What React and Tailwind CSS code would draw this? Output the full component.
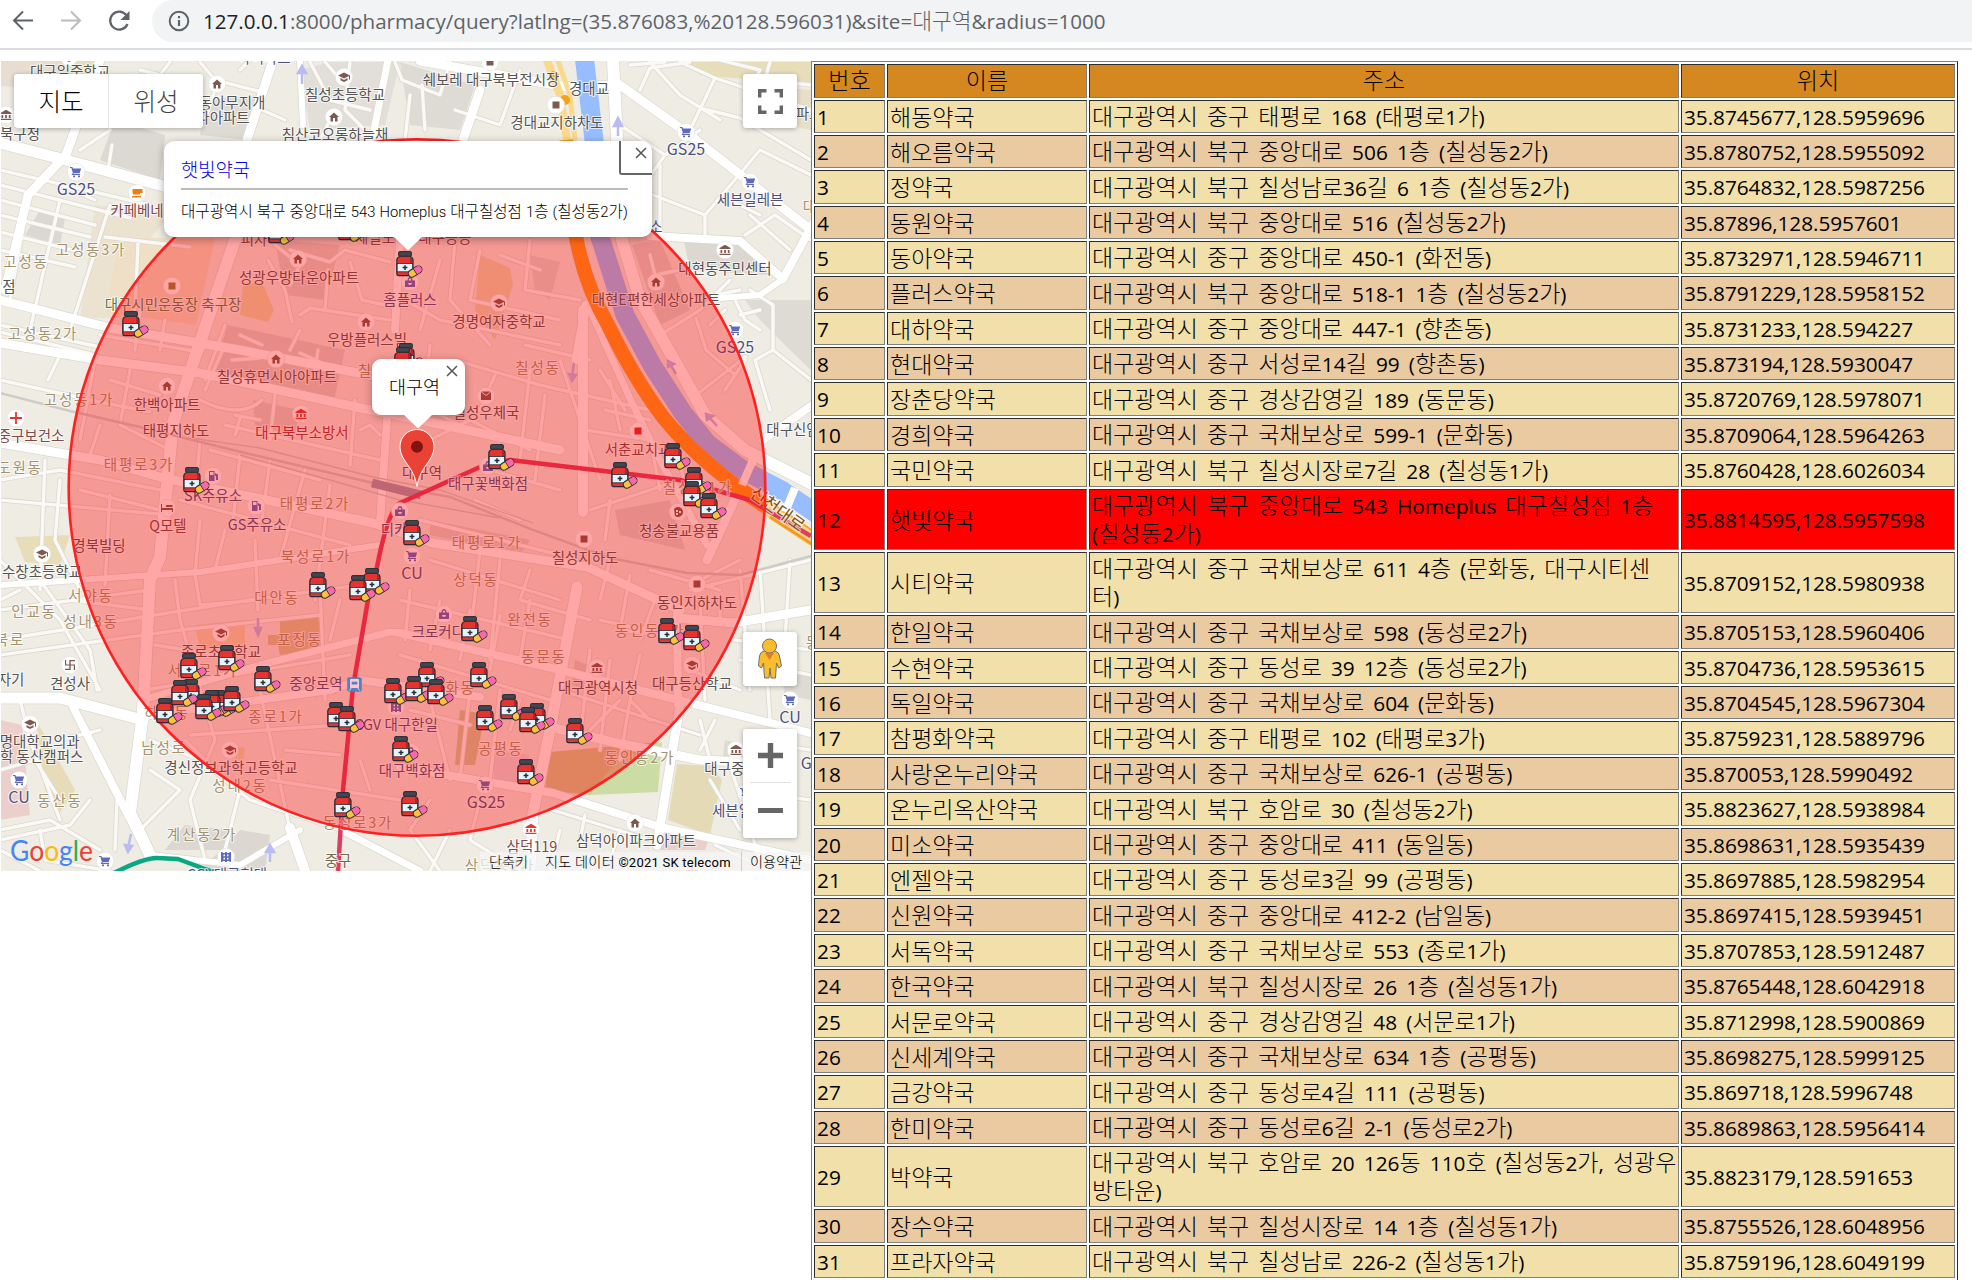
import React from "react";

const ROWS = [
  [100, "해동약국", ["대구광역시 중구 태평로 168 (태평로1가)"], "35.8745677,128.5959696"],
  [135, "해오름약국", ["대구광역시 북구 중앙대로 506 1층 (칠성동2가)"], "35.8780752,128.5955092"],
  [170, "정약국", ["대구광역시 북구 칠성남로36길 6 1층 (칠성동2가)"], "35.8764832,128.5987256"],
  [206, "동원약국", ["대구광역시 북구 중앙대로 516 (칠성동2가)"], "35.87896,128.5957601"],
  [241, "동아약국", ["대구광역시 중구 중앙대로 450-1 (화전동)"], "35.8732971,128.5946711"],
  [276, "플러스약국", ["대구광역시 북구 중앙대로 518-1 1층 (칠성동2가)"], "35.8791229,128.5958152"],
  [312, "대하약국", ["대구광역시 중구 중앙대로 447-1 (향촌동)"], "35.8731233,128.594227"],
  [347, "현대약국", ["대구광역시 중구 서성로14길 99 (향촌동)"], "35.873194,128.5930047"],
  [382, "장춘당약국", ["대구광역시 중구 경상감영길 189 (동문동)"], "35.8720769,128.5978071"],
  [418, "경희약국", ["대구광역시 중구 국채보상로 599-1 (문화동)"], "35.8709064,128.5964263"],
  [453, "국민약국", ["대구광역시 북구 칠성시장로7길 28 (칠성동1가)"], "35.8760428,128.6026034"],
  [489, "햇빛약국", ["대구광역시 북구 중앙대로 543 Homeplus 대구칠성점 1층", "(칠성동2가)"], "35.8814595,128.5957598"],
  [552, "시티약국", ["대구광역시 중구 국채보상로 611 4층 (문화동, 대구시티센", "터)"], "35.8709152,128.5980938"],
  [615, "한일약국", ["대구광역시 중구 국채보상로 598 (동성로2가)"], "35.8705153,128.5960406"],
  [651, "수현약국", ["대구광역시 중구 동성로 39 12층 (동성로2가)"], "35.8704736,128.5953615"],
  [686, "독일약국", ["대구광역시 중구 국채보상로 604 (문화동)"], "35.8704545,128.5967304"],
  [721, "참평화약국", ["대구광역시 중구 태평로 102 (태평로3가)"], "35.8759231,128.5889796"],
  [757, "사랑온누리약국", ["대구광역시 중구 국채보상로 626-1 (공평동)"], "35.870053,128.5990492"],
  [792, "온누리옥산약국", ["대구광역시 북구 호암로 30 (칠성동2가)"], "35.8823627,128.5938984"],
  [828, "미소약국", ["대구광역시 중구 중앙대로 411 (동일동)"], "35.8698631,128.5935439"],
  [863, "엔젤약국", ["대구광역시 중구 동성로3길 99 (공평동)"], "35.8697885,128.5982954"],
  [898, "신원약국", ["대구광역시 중구 중앙대로 412-2 (남일동)"], "35.8697415,128.5939451"],
  [934, "서독약국", ["대구광역시 중구 국채보상로 553 (종로1가)"], "35.8707853,128.5912487"],
  [969, "한국약국", ["대구광역시 북구 칠성시장로 26 1층 (칠성동1가)"], "35.8765448,128.6042918"],
  [1005, "서문로약국", ["대구광역시 중구 경상감영길 48 (서문로1가)"], "35.8712998,128.5900869"],
  [1040, "신세계약국", ["대구광역시 중구 국채보상로 634 1층 (공평동)"], "35.8698275,128.5999125"],
  [1075, "금강약국", ["대구광역시 중구 동성로4길 111 (공평동)"], "35.869718,128.5996748"],
  [1111, "한미약국", ["대구광역시 중구 동성로6길 2-1 (동성로2가)"], "35.8689863,128.5956414"],
  [1146, "박약국", ["대구광역시 북구 호암로 20 126동 110호 (칠성동2가, 성광우", "방타운)"], "35.8823179,128.591653"],
  [1209, "장수약국", ["대구광역시 북구 칠성시장로 14 1층 (칠성동1가)"], "35.8755526,128.6048956"],
  [1245, "프라자약국", ["대구광역시 북구 칠성남로 226-2 (칠성동1가)"], "35.8759196,128.6049199"],
  [1280],
];

/* Hangul and Latin runs use separate faces and sizes. */
function Mixed({ children, ko = "text-[23px]", en = "text-[20.8px]" }) {
  return children.split(/([\uAC00-\uD7A3]+)/).filter(Boolean).map((run, i) =>
    /[\uAC00-\uD7A3]/.test(run) ? (
      <span key={i} className={`font-['Noto_Sans_CJK_KR',sans-serif] font-light ${ko}`}>{run}</span>
    ) : (
      <span key={i} className={`whitespace-pre ${en}`}>{run}</span>
    )
  );
}

function BrowserBar() {
  return (
    <header className="flex h-[50px] w-full shrink-0 items-start border-b-2 border-[#dadce0] bg-white">
      <div className="flex h-[42px] w-[152px] items-center">
        <svg className="ml-[11px] h-[24px] w-[24px]" viewBox="0 0 24 24" fill="none" stroke="#5f6368" strokeWidth="2">
          <path d="M22 11.5H3M12 2.5L3 11.5l9 9" />
        </svg>
        <svg className="ml-[24px] h-[24px] w-[24px]" viewBox="0 0 24 24" fill="none" stroke="#babcbe" strokeWidth="2">
          <path d="M2 11.5h19M12 2.5l9 9-9 9" />
        </svg>
        <svg className="ml-[24px] h-[24px] w-[24px]" viewBox="0 0 24 24">
          <path d="M19.4 6.2A9 9 0 1 0 20.5 15" fill="none" stroke="#5f6368" strokeWidth="2.2" />
          <path d="M22.5 2v9h-9z" fill="#5f6368" />
        </svg>
      </div>
      <div className="flex h-[42px] flex-1 items-center rounded-l-full bg-[#f1f3f4] pl-[16px]">
        <svg className="h-[22px] w-[22px]" viewBox="0 0 22 22">
          <circle cx="11" cy="11" r="9.3" fill="none" stroke="#5f6368" strokeWidth="2" />
          <path d="M11 10v6M11 6v2.2" stroke="#5f6368" strokeWidth="2.2" />
        </svg>
        <div className="mb-[2px] ml-[13px] flex items-baseline whitespace-nowrap font-['Open_Sans',sans-serif] text-[#5f6368]">
          <span className="text-[20.6px] text-[#202124]">127.0.0.1</span>
          <Mixed en="text-[20.6px]" ko="text-[21.5px]">:8000/pharmacy/query?latlng=(35.876083,%20128.596031)&site=대구역&radius=1000</Mixed>
        </div>
      </div>
    </header>
  );
}

const MAJOR = [
  ["M0 143L58 158L167 187L420 235", 11], ["M100 60L66 155L28 195L5 290", 9], ["M273 60L247 140", 9], ["M300 60L303 125", 6],
  ["M388 60L372 140", 7], ["M420 61L567 87L615 85", 9], ["M613 60L617 140L640 230", 12], ["M617 83L687 133L811 230", 9],
  ["M480 90L463 140", 9], ["M650 236L740 241L783 279L815 220", 8], ["M783 279L760 295L720 298", 6],
  ["M0 300L110 328L200 343L240 350L420 385", 9], ["M0 343L100 360L200 373L370 410L420 420L560 450", 9],
  ["M240 225L193 363L173 423L160 557L150 580L143 713L130 813L150 855", 12],
  ["M0 443L100 460L160 477L373 523L433 543L587 567L680 610", 9], ["M0 585L200 572L380 545", 6],
  ["M387 420L380 523", 8], ["M583 310L583 512", 10], ["M588 305L608 350L633 405L660 460L707 545", 7], ["M586 305L576 360", 9],
  ["M622 240L640 300L680 370L705 415L745 450L820 488", 12], ["M753 460L707 560", 9], ["M815 403L763 440", 8],
  ["M0 698L60 698L143 720", 11], ["M73 707L127 813L150 855", 8], ["M150 855L240 865L300 830", 6],
  ["M577 587L550 730L533 813L530 870", 11], ["M400 633L560 670L690 703L811 733", 8],
  ["M550 727L617 743L700 760L745 762", 9], ["M400 767L553 793L660 827L811 860", 8], ["M680 705L657 845", 9],
  ["M677 610L678 705", 8], ["M811 610L733 623L677 618", 9], ["M143 700L260 665L390 632L400 633", 7],
  ["M150 715L330 690L360 680L480 697", 8], ["M290 828L305 871", 10], ["M345 832L420 871", 7], ["M400 240L395 330", 8],
];
const MINOR = [
  "M0 170L150 205M0 185L130 218M0 200L95 225M0 215L90 237M0 232L80 252M0 250L75 267M30 190L10 300M60 200L30 330M110 205L70 330M95 200L60 185",
  "M105 237L190 247M138 243L135 310M0 325L100 347M0 332L95 355M60 355L48 380M0 380L100 402L150 412M45 460L40 590M0 480L60 470L160 490M0 500L170 515",
  "M100 62L110 130L80 150M112 145L108 170M170 62L160 75L140 70M200 62L215 80L262 92M250 60L240 70M262 110L285 120M215 90L205 120",
  "M310 62L330 100L370 110M325 62L345 85M350 62L345 110L365 130M330 120L320 140M395 62L402 80L440 95L450 62M410 95L405 140M422 85L425 130M455 110L500 125L520 70",
  "M630 65L665 62M640 90L650 68L690 62M650 62L680 95L720 120M680 62L715 78L690 130M715 78L811 110M700 108L740 118L811 160M720 60L760 70L745 100M770 62L765 80L811 85M620 125L665 155L640 190M665 155L700 130M640 190L705 215L760 150M705 215L705 235M760 150L811 175M730 200L760 215M750 215L790 250M660 165L660 235M745 235L775 215L811 240",
  "M268 260L285 290L292 322M300 315L310 308L390 320M328 270L325 310M290 250L330 262L345 250L390 262M275 245L300 265L290 285M350 262L362 300L385 305M225 325L205 380M240 335L262 345M232 360L260 358M300 353L320 362M318 350L315 370",
  "M225 345L205 390M200 400Q240 420 262 400M235 415L260 420M240 418L235 435M300 330L290 350M225 425L380 460M355 400L350 465M275 395L270 440M360 430L370 425L380 435M140 310L135 350M165 320L160 350M100 335L200 352M205 345L195 365",
  "M95 360L80 440M130 370L120 425L170 450M100 425L90 455M110 380L160 395M60 480L55 540L80 590M80 490L160 510M110 495L105 585M180 500L350 545M200 440L195 500M210 450L320 480M240 455L232 530M270 460L262 520M305 470L280 560M330 485L315 600M200 520L195 575M225 530L215 570M255 540L258 610",
  "M405 300L440 320L560 345M440 260L420 330M480 250L470 300L560 320M500 255L540 270M455 240L450 300L490 345M530 240L525 290L580 300M525 345L590 360M430 345L425 400M455 360L540 385L650 410M495 375L480 410L440 415M530 370L520 460M560 360L600 480M600 370L625 410M605 410L650 420M610 380L620 430M585 430L650 440L660 490",
  "M420 405L470 430M430 440L470 420L530 450M545 395L535 480M490 470L560 490M590 510L680 480M610 500L605 540M680 460L690 520M475 500L520 520M420 520L560 555M430 560L560 600M480 550L470 640M500 560L490 660M530 570L520 600L590 620M610 560L600 600M630 575L620 630L700 640M650 570L720 590M740 560L700 580",
  "M0 610L150 590M0 640L155 615L250 600L360 585M0 655L180 630L320 615M0 560L60 620L100 690M40 580L90 650L97 690M20 590L0 600M70 600L150 610M175 580L180 620L215 740M195 575L200 605L260 600M320 590L325 700M340 600L330 640M155 645L220 655M145 690L350 655M190 735L340 725M185 740L215 770M260 690L290 830M150 740L200 760L250 800L340 830M215 740L190 800L205 860M240 790L225 850M150 770L180 790L140 830M117 800L115 850M285 750L340 755M270 780L400 800M360 760L370 790",
  "M400 600L570 640M410 590L405 640M440 600L430 650M470 610L460 660M500 615L490 670M530 600L520 660M400 655L550 700M420 660L450 780M470 690L460 780M410 710L470 725M500 690L490 780M520 700L510 730M560 690L700 735M590 650L580 740M610 660L600 750M640 655L630 700L620 760M600 620L690 640M655 600L640 640M630 700L650 720M590 730L620 700",
  "M690 590L811 560M700 600L705 700M720 600L720 620M740 570L750 690M760 570L770 720M790 560L785 640M735 640L811 650M740 660L811 675M690 670L740 690M700 720L710 760M715 720L700 750M745 740L811 750M710 780L740 830M730 765L760 860M770 760L765 820M740 790L811 800M715 845L770 871M620 860L600 871M553 810L650 840M585 815L580 840M430 800L410 830L440 871M450 830L430 871M560 830L550 871M480 800L470 840L520 871M620 830L610 860",
  "M665 332L700 310L730 280M696 318L706 350L735 375M700 392L745 357M650 255L655 275L680 270M690 300L740 290M735 300L745 320L760 330M740 315L760 310M750 290L773 305V350L811 380M773 350L755 360L770 410M745 360L725 390M710 325L725 310",
  "M0 830L50 820L100 850M0 770L35 760L60 800M20 700L30 740L60 820M40 830L45 860L110 871M90 800L70 825L0 840M0 850L40 871M60 740L100 730",
];

const PATCHES = [
  ["M1 61L70 61L60 90L1 86Z", "#e7ddd0"], ["M60 61L100 61L85 80L62 76Z", "#e8ddb9"], ["M115 120L165 135L160 180L100 160Z", "#dcd8d2"], ["M205 100L262 95L248 140L200 135Z", "#dedad4"],
  ["M330 64L372 70L368 108L320 95Z", "#e8ddb9"], ["M400 62L410 125L460 130L475 85Z", "#dedad4"], ["M310 130L300 70L330 62L400 62L385 125Z", "#e2ded8"],
  ["M688 62L811 62L811 85L700 75Z", "#e8ddb9"], ["M745 85L811 90L811 130L760 120Z", "#e8dfc8"], ["M95 205L170 215L140 250L120 318L80 318Z", "#ece2d0"],
  ["M120 238L215 238L196 325L105 312Z", "#efdfc6"], ["M243 285L262 282L274 310L268 322L240 315Z", "#e9dcab"], ["M228 325L345 350L333 405L210 380Z", "#dcd6cf"], ["M40 210L65 218L60 245L25 235Z", "#dbd7d1"],
  ["M275 240L340 245L325 300L285 295Z", "#dcd6cf"], ["M480 255L510 268L513 285L495 340L475 310Z", "#e6dbb0"], ["M530 255L560 262L550 300L535 290Z", "#e0dad4"],
  ["M632 245L660 240L690 310L660 325Z", "#dcd6d0"], ["M683 237L740 241L770 275L690 270Z", "#dcd8d1"], ["M745 300L811 300L811 370L785 345L760 320Z", "#dedad4"],
  ["M253 400L300 410L295 435L255 425Z", "#dcd6cf"], ["M430 520L530 540L520 555L430 535Z", "#dcd6d0"], ["M615 510L670 500L685 550L620 535Z", "#dcd6d0"],
  ["M15 537L70 535L60 565L25 562Z", "#e8ddb9"], ["M0 720L22 725L30 815L0 820Z", "#eccfcb"], ["M36 720L75 790L60 812L45 790Z", "#e6dcb8"],
  ["M195 625L245 620L245 645L200 650Z", "#ecdcb4"], ["M280 617L318 615L322 650L280 655L278 645L268 645L268 635L280 635Z", "#d4cc9a"], ["M460 710L485 714L475 765L455 765Z", "#d0cba0"],
  ["M550 752L660 742L590 795L545 790Z", "#cfcb94"], ["M615 762L662 742L658 792L590 795Z", "#cbdda4"], ["M677 764L710 766L722 780L710 835L668 820Z", "#e4dab5"],
  ["M575 660L600 670L590 690L572 685Z", "#dcd6d0"], ["M660 832L710 836L705 850L660 850Z", "#eccfcb"], ["M240 830L270 835L265 871L200 871Z", "#dcd8d1"],
  ["M185 825L230 830L225 850L165 850Z", "#dcd8d1"], ["M230 745L245 748L243 760L230 758Z", "#ecdcb4"], ["M490 750L530 755L520 785L495 780Z", "#e4dce2"],
  ["M780 670L811 675L811 700L785 695Z", "#dedad4"], ["M725 740L745 745L740 765L722 762Z", "#dedad4"],
];

const dark = "#545454", tan = "#a3926e", navy = "#4c5180", brown = "#7d4a4a";
const LABELS = [
  ["대구일중학교", 70, 72, dark], ["쉐보레 대구북부전시장", 491, 80, dark], ["경대교", 589, 89, dark], ["경대교지하차도", 557, 123, dark],
  ["아이파트", 264, 58, navy], ["동아무지개", 232, 103, dark], ["파아파트", 223, 118, dark], ["칠성초등학교", 345, 95, dark], ["침산코오롱하늘채", 335, 135, dark],
  ["북구청", 20, 134, dark], ["GS25", 76, 190, navy], ["카페베네", 137, 211, brown], ["고성동3가", 91, 250, tan], ["고성동", 26, 262, tan], ["점", 9, 287, dark],
  ["GS25", 686, 150, navy], ["세븐일레븐", 750, 200, navy], ["소", 656, 227, navy], ["파트", 809, 114, dark], ["대현", 818, 207, tan],
  ["대현동주민센터", 725, 269, dark], ["대현E편한세상아파트", 656, 300, dark], ["피자", 254, 240, brown], ["제일모", 375, 238, brown], ["대구공공", 445, 238, brown],
  ["성광우방타운아파트", 299, 278, dark], ["대구시민운동장 축구장", 173, 305, "#548048"], ["홈플러스", 410, 300, navy], ["경명여자중학교", 499, 322, dark],
  ["고성동2가", 43, 334, tan], ["우방플러스빌", 367, 340, dark], ["칠성휴먼시아아파트", 277, 377, dark], ["칠성", 373, 371, tan], ["칠성동", 538, 368, tan],
  ["GS25", 735, 348, navy], ["고성동1가", 79, 400, tan], ["한백아파트", 167, 405, dark], ["태평지하도", 176, 431, dark], ["대구북부소방서", 302, 433, "#a03c3c"],
  ["중구보건소", 31, 436, brown], ["도원동", 20, 468, tan], ["태평로3가", 139, 465, tan], ["칠성우체국", 486, 413, dark], ["대구역", 422, 473, dark],
  ["대구꽃백화점", 488, 484, navy], ["서춘교치과", 638, 450, brown], ["칠성동1가", 698, 488, tan], ["대구신암", 793, 430, dark], ["SK주유소", 213, 496, navy],
  ["GS주유소", 257, 525, navy], ["Q모텔", 168, 526, brown], ["태평로2가", 315, 504, tan], ["디카", 394, 530, navy], ["경북빌딩", 99, 546, dark], ["태평로1가", 487, 543, tan],
  ["청송불교용품", 679, 531, dark], ["칠성지하도", 585, 558, dark], ["북성로1가", 316, 557, tan], ["CU", 412, 574, navy], ["상덕동", 476, 580, tan],
  ["수창초등학교", 42, 572, dark], ["서야동", 91, 596, tan], ["인교동", 34, 612, tan], ["대안동", 277, 598, tan], ["성내3동", 91, 622, tan], ["북로", 10, 640, tan],
  ["크로커다일", 445, 632, navy], ["완전동", 530, 620, tan], ["동인지하차도", 697, 603, dark], ["동인동1가", 650, 631, tan], ["종로초등학교", 221, 652, dark],
  ["포정동", 300, 640, tan], ["동문동", 544, 657, tan], ["서문로1가", 203, 671, tan], ["대구광역시청", 598, 688, dark], ["대구등산학교", 692, 684, dark],
  ["견성사", 70, 684, dark], ["자기", 11, 680, dark], ["중앙로역", 316, 684, navy], ["하서동", 167, 713, tan], ["종로1가", 276, 717, tan], ["동화동", 453, 688, tan],
  ["CGV 대구한일", 396, 725, navy], ["CU", 790, 718, navy], ["계명대학교의과", 33, 742, dark], ["대학 동산캠퍼스", 35, 757, dark], ["남성로", 164, 748, tan],
  ["경신정보과학고등학교", 231, 768, dark], ["공평동", 501, 749, tan], ["대구백화점", 412, 771, navy], ["동인동2가", 640, 758, tan], ["대구중구", 731, 769, dark],
  ["성내2동", 240, 786, tan], ["CU", 19, 798, navy], ["동산동", 60, 801, tan], ["GS25", 486, 803, navy], ["세븐일", 732, 811, navy], ["동성로3가", 358, 823, tan],
  ["계산동2가", 202, 835, tan], ["중구", 338, 861, "#75694c"], ["삼덕119", 532, 847, brown], ["삼덕아이파크아파트", 636, 841, dark], ["삼덕동2가", 500, 866, tan],
  ["CGV대구현대", 227, 875, navy], ["GS25", 820, 764, navy], ["동인", 821, 643, tan],
];

/* Point-of-interest badges: [x, y, kind, colour] */
const POIS = [
  [217, 84, "home", "#7d5a50"], [344, 77, "school", "#7d5a50"], [334, 117, "home", "#7d5a50"], [6, 115, "hall", "#7d5a50"], [69, 57, "school", "#7d5a50"],
  [76, 172, "cart", "#5c6bc0"], [137, 193, "cup", "#ee7c11"], [490, 62, "sq", "#7d5a50"], [556, 105, "sq", "#7d5a50"], [686, 132, "cart", "#5c6bc0"], [750, 182, "cart", "#5c6bc0"],
  [725, 250, "hall", "#7d5a50"], [656, 282, "home", "#7d5a50"], [298, 259, "home", "#7d5a50"], [172, 286, "sq", "#96823a"], [410, 282, "bag", "#5c6bc0"], [499, 303, "school", "#7d5a50"],
  [366, 322, "home", "#7d5a50"], [276, 359, "home", "#7d5a50"], [735, 330, "cart", "#5c6bc0"], [167, 386, "home", "#7d5a50"], [301, 414, "hall", "#e03a30"], [16, 418, "plus", "#e03a30"],
  [486, 396, "mail", "#7d5a50"], [638, 431, "sq", "#e02a2a"], [213, 476, "fuel", "#5c6bc0"], [256, 506, "fuel", "#5c6bc0"], [167, 508, "bed", "#7d5a50"], [400, 511, "bag", "#5c6bc0"],
  [488, 466, "bag", "#5c6bc0"], [678, 512, "dots", "#7d5a50"], [584, 539, "sq", "#7d5a50"], [42, 554, "school", "#7d5a50"], [412, 556, "cart", "#5c6bc0"], [697, 584, "sq", "#7d5a50"],
  [444, 614, "bag", "#5c6bc0"], [221, 633, "school", "#7d5a50"], [70, 665, "temple", "#7d5a50"], [597, 668, "hall", "#7d5a50"], [692, 665, "school", "#7d5a50"], [396, 707, "film", "#5c6bc0"],
  [790, 700, "cart", "#5c6bc0"], [30, 724, "school", "#7d5a50"], [230, 750, "school", "#7d5a50"], [19, 780, "cart", "#5c6bc0"], [411, 752, "bag", "#5c6bc0"], [736, 750, "hall", "#7d5a50"],
  [485, 785, "cart", "#5c6bc0"], [531, 829, "hall", "#e03a30"], [635, 823, "home", "#7d5a50"], [105, 861, "cart", "#5c6bc0"], [226, 857, "film", "#5c6bc0"], [746, 793, "cart", "#5c6bc0"], [692, 871, "plus", "#e07a78"],
];
const GLYPHS = {
  home: "M-5 0L0-4.5L5 0H3.5V4.5H1V1H-1V4.5H-3.5V0Z",
  school: "M-6-1.5L0-4.5L6-1.5V2.5H5V-1L0 1.5ZM-3.5 1L0 3L3.5 1V3.2L0 5L-3.5 3.2Z",
  hall: "M-5.5-2L0-5.2L5.5-2V-1H-5.5ZM-4.5 0H-2.8V3H-4.5ZM-.9 0H.9V3H-.9ZM2.8 0H4.5V3H2.8ZM-5.5 3.8H5.5V5H-5.5Z",
  cart: "M-6-5H-3.6L-3-3.6H5.2L3.6 1.2H-2.4L-2.8 2H4V3H-4.4L-3.2.8L-4.6-4H-6ZM-3 3.4H-1V5.2H-3ZM2 3.4H4V5.2H2Z",
  cup: "M-4.5-4H5.5V0H3V1.5H-3.5Q-4.5 1-4.5-1ZM-5 3H4V4.5H-5Z",
  sq: "M-3.5-3.5H3.5V3.5H-3.5Z",
  bag: "M-5-1.5H-2.5A2.5 3.5 0 0 1 2.5-1.5H5V5H-5ZM-1.3-1.5H1.3A1.3 2 0 0 0-1.3-1.5ZM-2 1A2 2 0 0 0 2 1Z",
  plus: "M-.9-6H.9V-.9H6V.9H.9V6H-.9V.9H-6V-.9H-.9Z",
  mail: "M-5-4L0 0L5-4V4H-5ZM-4.5-4.5H4.5L0-1Z",
  fuel: "M-4-5H1.5V5H-4ZM-3-4V-1H.5V-4ZM2-3L5-1.5V4H3V0H2Z",
  bed: "M-6-4H-5V0H6V4H5V2H-5V4H-6ZM-1-3H5.5V-1H-1Z",
  dots: "M-4-3A5 5 0 1 1-3 4ZM-2-2V0H0V-2ZM1-1V1H3V-1ZM-2 1V3H0V1Z",
  temple: "M-.7-5H5V-3.8H.7V-.6H5V5H3.8V.6H.7V5H-.7V.6H-5V-.6H-.7ZM-5-5H-3.8V-.6H-5ZM-5 3.8H-.7V5H-5Z",
  film: "M-5-5H-3.5V-4H-1V-5H1V-4H3.5V-5H5V5H3.5V4H1V5H-1V4H-3.5V5H-5ZM-2.5-2.5V-.7H-1V-2.5ZM1-2.5V-.7H2.5V-2.5ZM-2.5.8V2.5H-1V.8ZM1 .8V2.5H2.5V.8Z",
};

const MEDS = [
  [268, 218], [338, 215], [396, 251], [122, 311], [183, 467], [397, 343], [394, 347], [403, 520], [309, 572], [363, 568], [349, 575],
  [488, 444], [611, 462], [664, 443], [685, 467], [683, 481], [700, 493], [218, 645], [180, 653], [254, 666], [182, 679], [171, 680],
  [210, 690], [203, 690], [195, 694], [223, 686], [156, 698], [327, 702], [338, 706], [392, 736], [334, 792], [401, 791], [384, 678],
  [461, 616], [658, 618], [683, 625], [418, 662], [470, 662], [405, 676], [427, 679], [500, 694], [476, 705], [528, 703], [519, 707], [566, 718], [517, 759],
];

function Medicine() {
  return (
    <g id="medicine">
      <path d="M4.5 5Q.8 6.5.8 9V23Q.8 24.6 2.5 24.6H15.3Q17 24.6 17 23V9Q17 6.5 13.5 5Z" fill="#e5332f" stroke="#272b36" strokeWidth="1.2" />
      <path d="M14 6Q16.2 7 16.2 9.5V23H14Z" fill="#b52328" />
      <rect x="1.2" y="12.5" width="15.4" height="8.3" fill="#e5f3fb" stroke="#272b36" strokeWidth=".8" />
      <path d="M9 14.3V19M6.6 16.6H11.4" stroke="#272b36" strokeWidth="1.5" />
      <rect x="2.6" y=".6" width="12.8" height="4.6" rx="1" fill="#43464e" stroke="#272b36" strokeWidth="1" />
      <g transform="rotate(-32 19 20.4)">
        <rect x="11.6" y="17" width="14.8" height="7.2" rx="3.6" fill="#fcc13d" stroke="#272b36" strokeWidth="1.1" />
        <path d="M19 17.3H22.8A3.2 3.2 0 0 1 22.8 23.9H19Z" fill="#fb64ae" />
        <path d="M19 17V24" stroke="#272b36" strokeWidth=".8" />
      </g>
    </g>
  );
}

function MapCanvas() {
  return (
    <svg className="block h-[810px] w-[810px] font-['Noto_Sans_CJK_KR',sans-serif]" viewBox="1 61 810 810">
      <defs><Medicine /></defs>
      <rect x="1" y="61" width="810" height="810" fill="#efece4" />
      {PATCHES.map(([d, c], i) => <path key={i} d={d} fill={c} />)}
      <g fill="none" strokeLinejoin="round" strokeLinecap="round">
        {MINOR.map((d, i) => <path key={i} d={d} stroke="#dcd8d0" strokeWidth="5" />)}
        {MAJOR.map(([d, w], i) => <path key={i} d={d} stroke="#dcd8d0" strokeWidth={w + 1.4} />)}
        {MINOR.map((d, i) => <path key={i} d={d} stroke="#faf9f6" strokeWidth="3.4" />)}
        {MAJOR.map(([d, w], i) => <path key={i} d={d} stroke="#ffffff" strokeWidth={w} />)}
      </g>
      <g fill="none" stroke="#cfccc8">
        <path d="M0 393L70 411L140 427L233 450L373 483L450 497L533 530L610 558L687 573L740 575L811 556" strokeWidth="2.4" />
        <path d="M190 438L260 448L373 477L440 490L533 523M240 455L330 480L400 500L500 518" strokeWidth="1.3" />
        <path d="M372 483L421 495" stroke="#9d9bb2" strokeWidth="9" />
      </g>
      <g fill="none" strokeLinejoin="round">
        <path d="M584 55L594 140L600 237L625 315L652 365L683 413L707 443L743 470L783 491L820 516" stroke="#98bdff" strokeWidth="19" />
        <path d="M545 55L560 95L567 140" stroke="#fbd98a" strokeWidth="8" />
        <path d="M556 55L570 95L575 140" stroke="#fbd98a" strokeWidth="5" />
        <path d="M566 140L576 237Q585 285 608 325Q635 380 663 417Q695 457 750 496L815 540" stroke="#f0a030" strokeWidth="14.5" />
        <path d="M566 140L576 237Q585 285 608 325Q635 380 663 417Q695 457 750 496L815 540" stroke="#ff9d1f" strokeWidth="12" />
        <path d="M765 508L815 541" stroke="#fcd283" strokeWidth="13" />
        <path d="M770 517L815 546" stroke="#f29a1e" strokeWidth="3" />
        <circle cx="554" cy="76" r="5" fill="#f5a31b" /><circle cx="565" cy="100" r="5" fill="#f5a31b" />
        <path d="M753 460L742 485M795 488L785 512" stroke="#fff" strokeWidth="8" />
        <path d="M811 536L750 500L680 480L510 460L480 467L400 503Q388 510 377 567L368 600L353 687L343 790L338 871" stroke="#dd3c60" strokeWidth="4.5" />
        <path d="M112 874Q145 857 158 858L178 859L216 873" stroke="#0aa783" strokeWidth="4.5" />
      </g>
      <g stroke="#b9bcf2" fill="#b9bcf2" strokeWidth="2.5">
        <path d="M302 84V70M298 73L302 66L306 73ZM618 136V122M614 126L618 118L622 126ZM574 363L572 376M569 374L572 381L576 375ZM131 834L128 848M125 845L128 852L132 846ZM270 862V850M266 852L270 845L274 852ZM258 618V630M255 628L258 635L261 628ZM676 374L670 364M668 367L668 361L674 364ZM717 426L709 417M707 420L706 414L713 416Z" />
      </g>
      {POIS.map(([x, y, k, c], i) => (
        <g key={i} transform={`translate(${x} ${y})`}>
          <circle r="8.7" fill="#fff" stroke="#ddd" strokeWidth=".5" />
          <path d={GLYPHS[k]} fill={c} fillRule="evenodd" />
        </g>
      ))}
      <g textAnchor="middle" stroke="#fff" strokeWidth="2.2" strokeOpacity=".7" paintOrder="stroke" strokeLinejoin="round">
        {LABELS.map(([t, x, y, c], i) => (
          <text key={i} x={x} y={y + 5.2} fill={c} fontSize={/^[A-Z0-9]+$/.test(t) ? 16 : 14.5} letterSpacing={c === tan ? 1.8 : 0}>{t}</text>
        ))}
        <text transform="translate(777 510) rotate(36)" y="5" fill="#7c5312" fontSize="17">신천대로</text>
      </g>
      <circle cx="417" cy="487.5" r="348.3" fill="#ff0000" fillOpacity=".35" stroke="#ff2020" strokeWidth="2.6" />
      <g transform="translate(354.5 684.5)">
        <rect x="-7.3" y="-7.3" width="14.6" height="14.6" rx="2" fill="#4f83c4" />
        <path d="M-4-5H4V3H-4ZM-3 3L-5 6M3 3L5 6" fill="#ffc9cc" stroke="#ffc9cc" />
        <path d="M-2.8-2.8H2.8V0H-2.8Z" fill="#4f83c4" />
      </g>
      {MEDS.map(([x, y], i) => <use key={i} href="#medicine" transform={`translate(${x} ${y})`} />)}
      <path d="M417 486.5C415.6 478.5 413.5 473 407.5 464.5C403 458.5 400 453 400 446.5A17 17 0 0 1 434 446.5C434 453 431 458.5 426.5 464.5C420.5 473 418.4 478.5 417 486.5Z" fill="#ea4335" stroke="#fff" strokeWidth="1" />
      <circle cx="417" cy="446.8" r="6" fill="#811411" />
    </svg>
  );
}

function CloseX() {
  return (
    <svg className="h-[12px] w-[12px]" viewBox="0 0 12 12"><path d="M1 1L11 11M11 1L1 11" stroke="#555" strokeWidth="1.5" /></svg>
  );
}

function Tail({ className }) {
  return <svg className={`absolute ${className}`} viewBox="0 0 28 14"><path d="M0 0H28L14 13.5Z" fill="#fff" /></svg>;
}

function MapPanel() {
  const card = "absolute rounded-[3px] bg-white shadow-[0_1px_5px_rgba(0,0,0,0.3)]";
  return (
    <section className="relative ml-px h-[810px] w-[810px] shrink-0 overflow-hidden font-['Roboto','Noto_Sans_CJK_KR',sans-serif]">
      <MapCanvas />

      <div className={`${card} left-[13px] top-[13px] flex h-[54px] w-[189px] font-['Noto_Sans_CJK_KR',sans-serif] text-[24.5px] font-light leading-[53px]`}>
        <div className="w-[95px] border-r border-[#e6e6e6] text-center text-black">지도</div>
        <div className="flex-1 text-center text-[#444]">위성</div>
      </div>

      <div className="absolute left-[163px] top-[80px] h-[96px] w-[488px] rounded-[10px] bg-white px-[17px] shadow-[0_2px_9px_rgba(0,0,0,0.35)]">
        <div className="h-[49px] w-[447px] border-b-2 border-[#bcbcbc] pt-[14px] font-['Noto_Sans_CJK_KR',sans-serif] text-[18.8px] font-light leading-[28px] text-[#0000ee]">햇빛약국</div>
        <div className="whitespace-nowrap pt-[7px] font-light leading-[26px] text-black [word-spacing:0.4px]">
          <Mixed ko="text-[15.6px]" en="text-[14.8px]">대구광역시 북구 중앙대로 543 Homeplus 대구칠성점 1층 (칠성동2가)</Mixed>
        </div>
        <div className="absolute right-0 top-0 flex h-[34px] w-[33px] items-center justify-center rounded-bl-[3px] border-b-2 border-l-2 border-[#666] pb-[8px] pl-[9px]"><CloseX /></div>
        <Tail className="left-[230px] top-[95.5px] h-[14px] w-[28px]" />
      </div>

      <div className="absolute left-[371px] top-[298px] flex h-[56px] w-[93px] items-center rounded-[9px] bg-white pl-[17px] font-['Noto_Sans_CJK_KR',sans-serif] text-[18.5px] font-light text-black shadow-[0_2px_9px_rgba(0,0,0,0.3)]">
        대구역
        <span className="absolute right-[7px] top-[6px] flex"><CloseX /></span>
        <Tail className="left-[32px] top-[55.5px] h-[14px] w-[28px]" />
      </div>

      <div className={`${card} left-[742px] top-[13px] flex h-[54px] w-[54px] items-center justify-center`}>
        <svg className="h-[25px] w-[25px]" viewBox="0 0 25 25" fill="none" stroke="#666" strokeWidth="3.4"><path d="M1.7 8.5V1.7H8.5M16.5 1.7H23.3V8.5M23.3 16.5V23.3H16.5M8.5 23.3H1.7V16.5" /></svg>
      </div>
      <div className={`${card} left-[742px] top-[571px] flex h-[54px] w-[54px] items-center justify-center`}>
        <svg className="h-[42px] w-[26px]" viewBox="0 0 26 42" fill="#fbbd2d" stroke="#6f6f6f" strokeWidth="1">
          <path d="M7 13Q3 14 2.5 18L1.5 28L4.5 30L6.5 25L7.5 40H12L13 30L14 40H18.5L19.5 25L21.5 30L24.5 28L22.5 18Q22 14 18 13Z" />
          <circle cx="12.5" cy="8" r="7" />
          <path d="M8 15H17L12.5 22Z" fill="#e07b2a" stroke="none" />
        </svg>
      </div>
      <div className={`${card} left-[742px] top-[668px] flex h-[109px] w-[54px] flex-col items-center`}>
        <div className="flex h-[54px] w-[41px] items-center justify-center border-b border-[#e0e0e0]">
          <svg className="h-[25px] w-[25px]" viewBox="0 0 25 25"><path d="M12.5 0V25M0 12.5H25" stroke="#666" strokeWidth="5.4" /></svg>
        </div>
        <div className="mt-[25px] h-[5px] w-[25px] bg-[#666]" />
      </div>

      <div className="absolute bottom-0 left-[8px]">
        <svg className="h-[38px] w-[90px]" viewBox="0 0 90 38">
          <text x="1" y="28" fontFamily="Lato, sans-serif" fontSize="28" fontWeight="400" textLength="83" lengthAdjust="spacingAndGlyphs">
            <tspan fill="#4285f4">G</tspan><tspan fill="#ea4335">o</tspan><tspan fill="#fbbc05">o</tspan><tspan fill="#4285f4">g</tspan><tspan fill="#34a853">l</tspan><tspan fill="#ea4335">e</tspan>
          </text>
        </svg>
      </div>
      <div className="absolute bottom-0 right-0 flex h-[19px] items-center whitespace-nowrap bg-[#f5f5f5]/75 leading-[19px] text-black">
        <span className="w-[57px] pl-[9px]"><Mixed ko="text-[14.2px]" en="text-[13px]">단축키</Mixed></span>
        <span className="w-[204px] pl-[8px] tracking-[0.24px]"><Mixed ko="text-[14.2px]" en="text-[13px]">지도 데이터 ©2021 SK telecom</Mixed></span>
        <span className="w-[70px] border-l border-[#ccc] pl-[8px]"><Mixed ko="text-[14.2px]" en="text-[13px]">이용약관</Mixed></span>
      </div>
    </section>
  );
}

function PharmacyTable() {
  const cell = "border border-[#2c2c2c] border-r-[#808080] border-b-[#808080] p-0";
  return (
    <div className="h-[1219px] w-[1147px] shrink-0 overflow-hidden">
      <table className="w-[1147px] table-fixed border-separate border-spacing-[2px] border border-t-[#808080] border-l-[#808080] border-r-[#2c2c2c] border-b-[#2c2c2c] font-['Open_Sans',sans-serif] text-black [word-spacing:3.7px]">
        <colgroup><col className="w-[71px]" /><col className="w-[200px]" /><col className="w-[590px]" /><col className="w-[274px]" /></colgroup>
        <thead>
          <tr className="h-[34px] bg-[#d58820] leading-[28px]">
            {["번호", "이름", "주소", "위치"].map((h) => <th key={h} className={`${cell} text-center font-normal`}><Mixed>{h}</Mixed></th>)}
          </tr>
        </thead>
        <tbody>
          {ROWS.slice(0, -1).map(([top, name, addr, pos], i) => (
            <tr key={top} className={`leading-[28px] ${i === 11 ? "bg-[#ff0000]" : i % 2 ? "bg-[#e9caa1]" : "bg-[#f2e0aa]"}`} style={{ height: ROWS[i + 1][0] - top - 2 }}>
              <td className={`${cell} pl-[2px]`}><div className="h-[28px]"><Mixed>{String(i + 1)}</Mixed></div></td>
              <td className={`${cell} pb-[2px] pl-[2px]`}><div className="h-[28px]"><Mixed>{name}</Mixed></div></td>
              <td className={`${cell} whitespace-nowrap pb-[3px] pl-[2px]`}>{addr.map((l) => <div key={l} className="h-[28px]"><Mixed>{l}</Mixed></div>)}</td>
              <td className={`${cell} pl-[2px] tracking-[-0.06px]`}><div className="h-[28px]"><Mixed>{pos}</Mixed></div></td>
            </tr>
          ))}
          <tr className="h-[33px] bg-[#e9caa1]"><td className={cell} /><td className={cell} /><td className={cell} /><td className={cell} /></tr>
        </tbody>
      </table>
    </div>
  );
}

export default function App() {
  return (
    <div className="flex h-[1280px] w-[1972px] flex-col overflow-hidden bg-white">
      <BrowserBar />
      <main className="mt-[11px] flex items-start">
        <MapPanel />
        <PharmacyTable />
      </main>
    </div>
  );
}
